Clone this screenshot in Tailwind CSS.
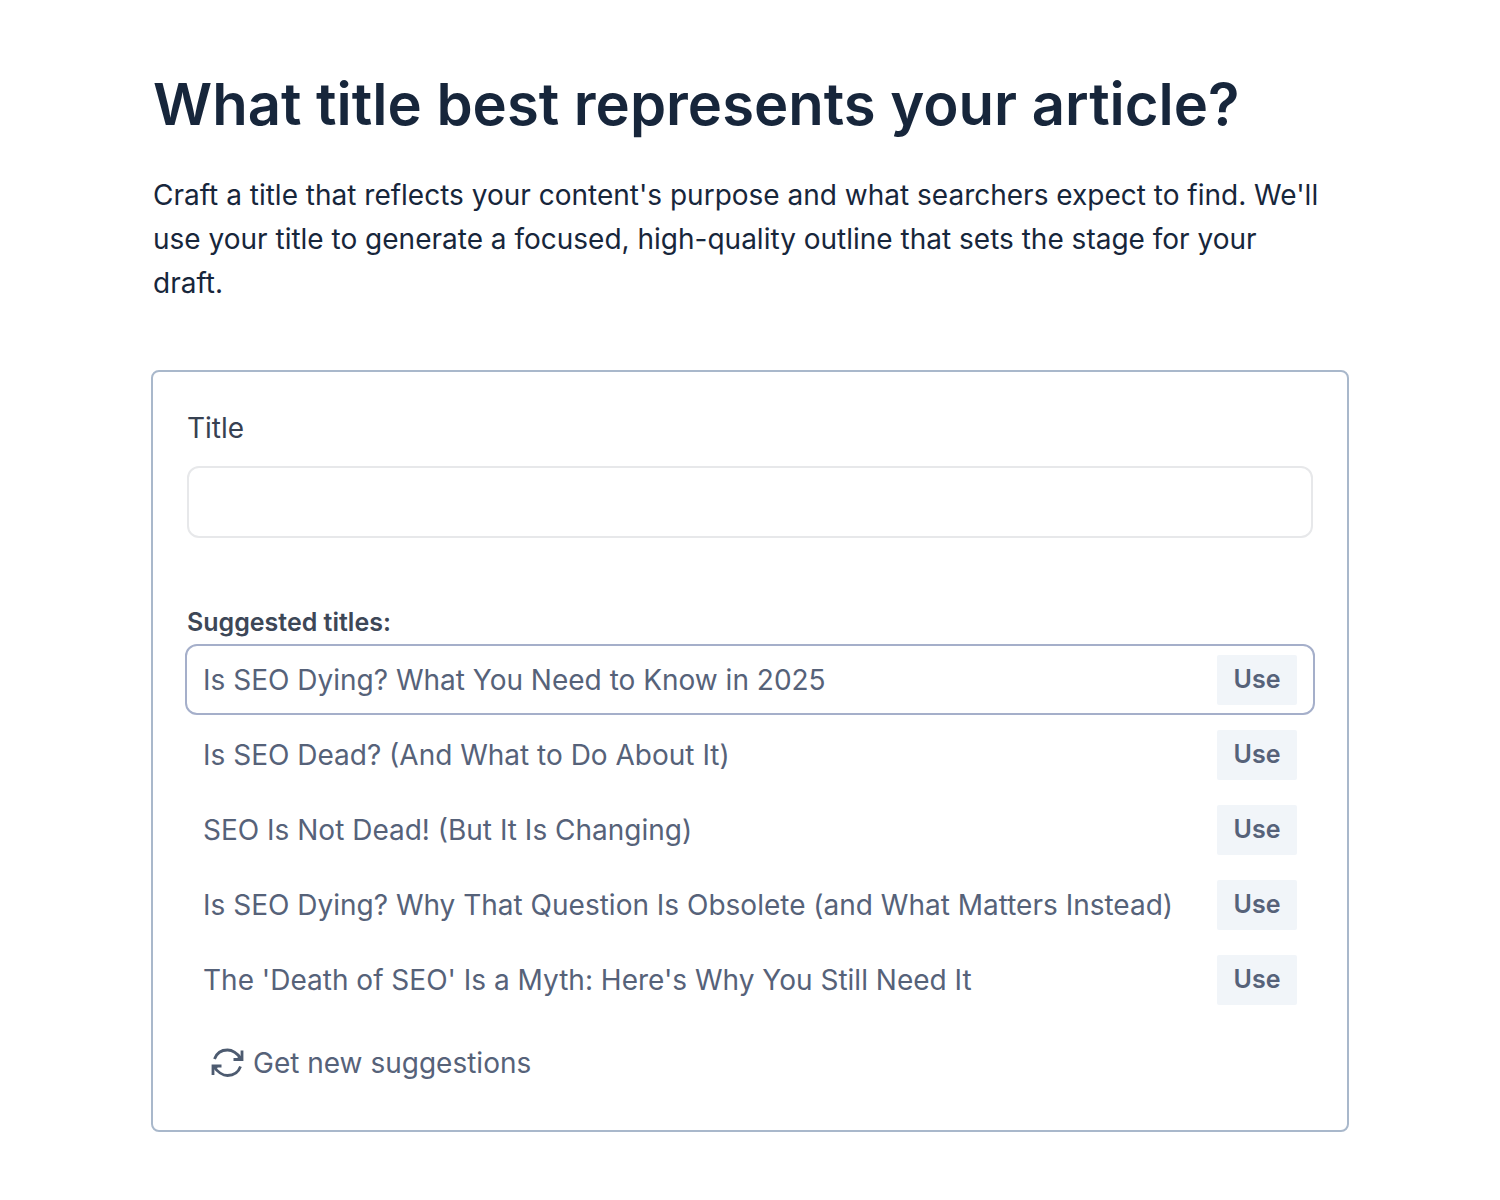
<!DOCTYPE html>
<html lang="en">
<head>
  <meta charset="UTF-8" />
  <meta name="viewport" content="width=device-width, initial-scale=1.0"/>
  <title>Choose a title</title>
  <script src="https://cdn.jsdelivr.net/npm/@tailwindcss/browser@4"></script>
</head>
<body class="bg-white min-h-screen font-['Inter',sans-serif] text-[#17263b]">
  <main class="max-w-[1198px] mx-auto pt-[67px] pb-16">
    <!-- Heading -->
    <header class="pl-0.5 pr-6">
      <h1 class="text-[58px] leading-[74px] font-semibold">What title best represents your article?</h1>
      <p class="mt-8 text-[28px] leading-[44px]">
        Craft a title that reflects your content's purpose and what searchers expect to find. We'll use your title to generate a focused, high-quality outline that sets the stage for your draft.
      </p>
    </header>

    <!-- Title form -->
    <form class="mt-[65px] px-8 pt-[34px] pb-[45px] border-2 border-[#a9b8cb] rounded-lg">
      <div class="px-0.5">
        <label for="title" class="block text-[28px] leading-[44px] text-[#374151]">Title</label>
        <input type="text" id="title" name="title" class="block mt-4 w-full h-[72px] px-4 text-[28px] border-2 border-[#e7e8ea] rounded-xl" />
        <h2 class="mt-16 mb-0.5 text-[25px] leading-[40px] font-semibold text-[#3d4757]">Suggested titles:</h2>
      </div>

      <!-- Suggestions -->
      <ul class="text-[28px] text-[#566279]">
        <li class="flex items-center justify-between h-[71px] mb-1 px-4 border-2 border-[#a5afca] rounded-xl">
          <span>Is SEO Dying? What You Need to Know in 2025</span>
          <button type="button" class="w-20 h-[50px] rounded-xs bg-[#f1f5f9] text-[25px] font-semibold">Use</button>
        </li>
        <li class="flex items-center justify-between h-[71px] mb-1 px-4 border-2 border-transparent rounded-xl">
          <span>Is SEO Dead? (And What to Do About It)</span>
          <button type="button" class="w-20 h-[50px] rounded-xs bg-[#f1f5f9] text-[25px] font-semibold">Use</button>
        </li>
        <li class="flex items-center justify-between h-[71px] mb-1 px-4 border-2 border-transparent rounded-xl">
          <span>SEO Is Not Dead! (But It Is Changing)</span>
          <button type="button" class="w-20 h-[50px] rounded-xs bg-[#f1f5f9] text-[25px] font-semibold">Use</button>
        </li>
        <li class="flex items-center justify-between h-[71px] mb-1 px-4 border-2 border-transparent rounded-xl">
          <span>Is SEO Dying? Why That Question Is Obsolete (and What Matters Instead)</span>
          <button type="button" class="w-20 h-[50px] rounded-xs bg-[#f1f5f9] text-[25px] font-semibold">Use</button>
        </li>
        <li class="flex items-center justify-between h-[71px] px-4 border-2 border-transparent rounded-xl">
          <span>The 'Death of SEO' Is a Myth: Here's Why You Still Need It</span>
          <button type="button" class="w-20 h-[50px] rounded-xs bg-[#f1f5f9] text-[25px] font-semibold">Use</button>
        </li>
      </ul>

      <button type="button" class="flex items-center gap-2 mt-[26px] ml-6 text-[28px] leading-[44px] text-[#566279]">
        <svg class="w-9 h-9" viewBox="0 0 36 36" fill="none" stroke="#4d5b70" stroke-width="2.8" aria-hidden="true">
          <path d="M5.500 14C7.500 8.500 12.500 5 18.500 5c5.500 0 9.500 3 14 9" />
          <path d="M33 5.500V14.500H24.500" />
          <path d="M31.500 21.500C29.500 27 24.500 30.500 18.500 30.500c-5.500 0-9.500-3-14-9" />
          <path d="M4 30V21H12.500" />
          <path d="M29 11.500L33 14.500H28zM8 24L4 21h5z" fill="#4d5b70" stroke="none" />
        </svg>
        Get new suggestions
      </button>
    </form>
  </main>
</body>
</html>
